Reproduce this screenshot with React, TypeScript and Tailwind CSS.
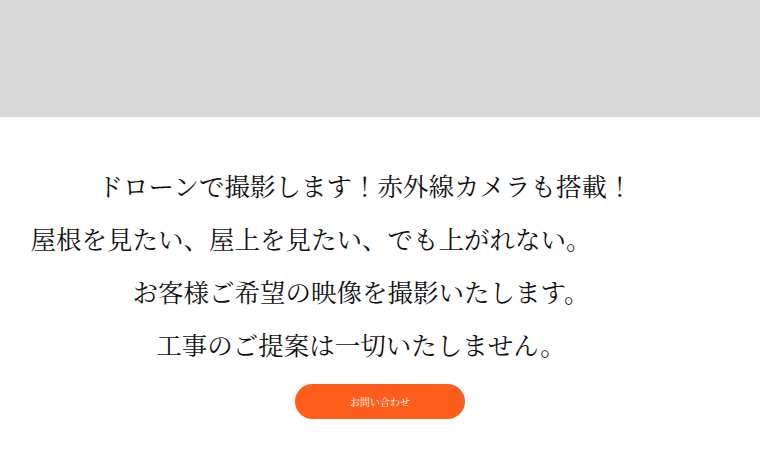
import React from "react";

const serif = {
  fontFamily:
    '"Noto Serif CJK JP", "IPAMincho", "Noto Sans CJK JP", "Liberation Serif", serif',
};

export default function App() {
  return (
    <div className="w-[760px] h-[475px] bg-white overflow-hidden" style={serif}>
      <div className="h-[117px] bg-[#d9d9d9]" />
      <div className="pt-[42px] pr-[38px] flex flex-col items-center text-[25.5px] leading-[53px] text-[#111]">
        <p className="whitespace-pre pl-[8px]">ドローンで撮影します！赤外線カメラも搭載！</p>
        <p className="whitespace-pre pr-[100px]">屋根を見たい、屋上を見たい、でも上がれない。</p>
        <p className="whitespace-pre">お客様ご希望の映像を撮影いたします。</p>
        <p className="whitespace-pre">工事のご提案は一切いたしません。</p>
      </div>
      <div className="flex justify-center mt-[13px]">
        <button className="w-[170px] h-[35px] rounded-full bg-[#fe5d1c] text-white text-[10px] leading-none flex items-center justify-center">
          お問い合わせ
        </button>
      </div>
    </div>
  );
}
